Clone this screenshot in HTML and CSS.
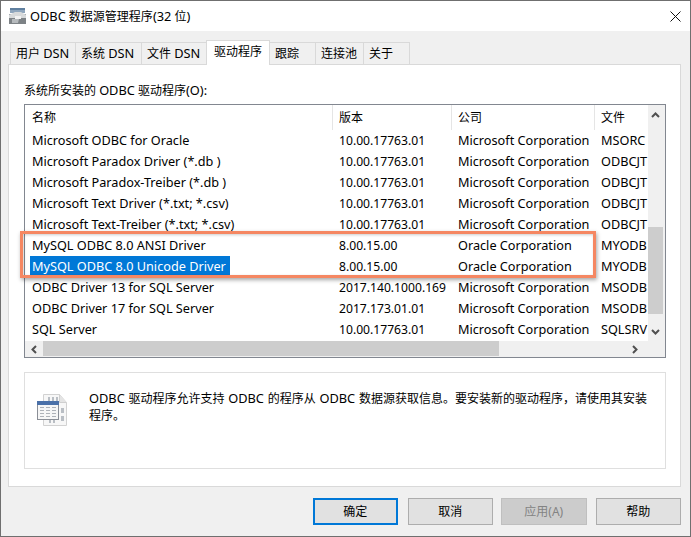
FILE: index.html
```html
<!DOCTYPE html>
<html lang="zh-CN">
<head>
<meta charset="utf-8">
<title>ODBC 数据源管理程序(32 位)</title>
<link rel="stylesheet" href="styles.css">
</head>
<body>
<div class="window">
  <header class="titlebar">
    <svg class="app-icon" width="18" height="18" viewBox="0 0 18 18">
      <rect x="1" y="1" width="15" height="5" fill="#8fa6bd"/>
      <rect x="1" y="1" width="15" height="2" fill="#5f7f9f"/>
      <path d="M0 7h17v10H0z" fill="#9a9fa3"/>
      <path d="M0 8l6-3h6l5 3v3H0z" fill="#d8dadb"/>
      <path d="M0 11h17v6H0z" fill="#7d8286"/>
      <path d="M3 12h7l-1 4H3z" fill="#b6babd"/>
      <rect x="6" y="9" width="6" height="3" fill="#f2f2f2"/>
    </svg>
    <span class="title"><span class="lat">ODBC</span> 数据源管理程序<span class="lat">(32</span> 位<span class="lat">)</span></span>
    <svg class="close" width="11" height="11" viewBox="0 0 11 11"><path d="M.5.5l10 10M10.500.5l-10 10" stroke="#111" fill="none"/></svg>
  </header>
  <main class="content">
    <nav class="tabs">
      <div class="tab">用户 <span class="lat">DSN</span></div>
      <div class="tab">系统 <span class="lat">DSN</span></div>
      <div class="tab">文件 <span class="lat">DSN</span></div>
      <div class="tab active">驱动程序</div>
      <div class="tab">跟踪</div>
      <div class="tab">连接池</div>
      <div class="tab">关于</div>
    </nav>
    <section class="panel">
      <div class="list-label">系统所安装的 <span class="lat">ODBC</span> 驱动程序<span class="lat">(O):</span></div>
      <div class="list">
        <div class="list-main">
          <div class="list-view">
            <div class="row head">
              <div class="cell">名称</div>
              <div class="cell">版本</div>
              <div class="cell">公司</div>
              <div class="cell">文件</div>
            </div>
            <div class="row"><div class="cell">Microsoft ODBC for Oracle</div><div class="cell ver">10.00.17763.01</div><div class="cell">Microsoft Corporation</div><div class="cell">MSORC</div></div>
            <div class="row"><div class="cell">Microsoft Paradox Driver (*.db )</div><div class="cell ver">10.00.17763.01</div><div class="cell">Microsoft Corporation</div><div class="cell">ODBCJT</div></div>
            <div class="row"><div class="cell">Microsoft Paradox-Treiber (*.db )</div><div class="cell ver">10.00.17763.01</div><div class="cell">Microsoft Corporation</div><div class="cell">ODBCJT</div></div>
            <div class="row"><div class="cell">Microsoft Text Driver (*.txt; *.csv)</div><div class="cell ver">10.00.17763.01</div><div class="cell">Microsoft Corporation</div><div class="cell">ODBCJT</div></div>
            <div class="row"><div class="cell">Microsoft Text-Treiber (*.txt; *.csv)</div><div class="cell ver">10.00.17763.01</div><div class="cell">Microsoft Corporation</div><div class="cell">ODBCJT</div></div>
            <div class="row"><div class="cell">MySQL ODBC 8.0 ANSI Driver</div><div class="cell ver">8.00.15.00</div><div class="cell">Oracle Corporation</div><div class="cell">MYODB</div></div>
            <div class="row"><div class="cell"><span class="selected">MySQL ODBC 8.0 Unicode Driver</span></div><div class="cell ver">8.00.15.00</div><div class="cell">Oracle Corporation</div><div class="cell">MYODB</div></div>
            <div class="row"><div class="cell">ODBC Driver 13 for SQL Server</div><div class="cell ver">2017.140.1000.169</div><div class="cell">Microsoft Corporation</div><div class="cell">MSODB</div></div>
            <div class="row"><div class="cell">ODBC Driver 17 for SQL Server</div><div class="cell ver">2017.173.01.01</div><div class="cell">Microsoft Corporation</div><div class="cell">MSODB</div></div>
            <div class="row"><div class="cell">SQL Server</div><div class="cell ver">10.00.17763.01</div><div class="cell">Microsoft Corporation</div><div class="cell">SQLSRV</div></div>
          </div>
          <div class="vscroll">
            <svg class="arrow" width="9" height="6" viewBox="0 0 9 6"><path d="M1 5l3.500-3.500L8 5" stroke="#505050" stroke-width="2" fill="none"/></svg>
            <div class="vthumb"></div>
            <svg class="arrow" width="9" height="6" viewBox="0 0 9 6"><path d="M1 1l3.500 3.500L8 1" stroke="#505050" stroke-width="2" fill="none"/></svg>
          </div>
        </div>
        <div class="hscroll">
          <svg class="arrow-h" width="6" height="9" viewBox="0 0 6 9"><path d="M5 1L1.500 4.500 5 8" stroke="#505050" stroke-width="2" fill="none"/></svg>
          <div class="hthumb"></div>
          <svg class="arrow-h" width="6" height="9" viewBox="0 0 6 9"><path d="M1 1l3.500 3.500L1 8" stroke="#505050" stroke-width="2" fill="none"/></svg>
        </div>
      </div>
      <div class="info">
        <svg class="info-icon" width="32" height="33" viewBox="0 0 32 33">
          <path d="M6.500.5h16l7 8v23h-23z" fill="#f7f7f7" stroke="#d2d2d2"/>
          <path d="M22.500.5v8h7" fill="#e4e4e4" stroke="#cfcfcf"/>
          <g fill="#b9bec4"><rect x="11" y="3" width="2" height="4"/><rect x="15" y="3" width="2" height="4"/><rect x="19" y="3" width="2" height="4"/><rect x="24" y="14" width="3" height="5"/><rect x="24" y="22" width="3" height="5"/><rect x="12" y="26" width="2" height="3"/><rect x="16" y="26" width="2" height="3"/></g>
          <rect x="0.500" y="7.500" width="21" height="18" fill="#f6f6f6" stroke="#8a8e96"/>
          <rect x="0" y="7" width="22" height="4" fill="#4a70a8"/>
          <g fill="#aeb2b8"><rect x="3" y="13" width="4" height="1"/><rect x="9" y="13" width="4" height="1"/><rect x="15" y="13" width="4" height="1"/><rect x="3" y="16" width="4" height="1"/><rect x="9" y="16" width="4" height="1"/><rect x="15" y="16" width="4" height="1"/><rect x="3" y="19" width="4" height="1"/><rect x="9" y="19" width="4" height="1"/><rect x="15" y="19" width="4" height="1"/><rect x="3" y="22" width="4" height="1"/><rect x="9" y="22" width="4" height="1"/><rect x="15" y="22" width="4" height="1"/></g>
        </svg>
        <p class="info-text"><span class="lat">ODBC</span> 驱动程序允许支持 <span class="lat">ODBC</span> 的程序从 <span class="lat">ODBC</span> 数据源获取信息。要安装新的驱动程序，请使用其安装<br>程序。</p>
      </div>
      <div class="highlight"></div>
    </section>
    <footer class="buttons">
      <div class="btn primary">确定</div>
      <div class="btn cancel">取消</div>
      <div class="btn disabled">应用(A)</div>
      <div class="btn">帮助</div>
    </footer>
  </main>
</div>
</body>
</html>
```
FILE: styles.css
```css
* { box-sizing: border-box; }
html, body { margin: 0; padding: 0; }
body {
  width: 691px;
  height: 537px;
  overflow: hidden;
  font-family: "Noto Sans", "Noto Sans CJK SC", sans-serif;
  font-size: 12px;
  color: #000;
}
.lat { font-size: 12.8px; }
.window {
  width: 691px;
  height: 537px;
  display: flex;
  flex-direction: column;
  border: 1px solid #6f6f6f;
  background: #f0f0f0;
}
.titlebar {
  height: 30px;
  flex: none;
  background: #fff;
  display: flex;
  align-items: center;
  padding: 0 9px 0 8px;
  gap: 3px;
}
.title { flex: 1; }
.content { flex: 1; display: flex; flex-direction: column; padding: 0 9px 0 7px; min-height: 0; }
.tabs {
  display: grid;
  grid-template-columns: 65px 66px 65px 63px 46px 48px 46px;
  align-items: end;
  height: 33px;
  padding-left: 2px;
  position: relative;
  z-index: 1;
}
.tab {
  height: 22px;
  line-height: 21px;
  padding-left: 5px;
  border: 1px solid #d9d9d9;
  border-bottom: 0;
  background: #f0f0f0;
  margin-right: -1px;
  white-space: nowrap;
}
.tab.active {
  height: 25px;
  line-height: 21px;
  background: #fff;
  margin-bottom: -1px;
  padding-left: 7px;
  position: relative;
  z-index: 1;
}
.panel {
  height: 423px;
  flex: none;
  background: #fff;
  border: 1px solid #d9d9d9;
  padding: 0 14px 0 15px;
  position: relative;
}
.list-label { height: 39px; padding-top: 15px; line-height: 20px; }
.list {
  height: 254px;
  border: 1px solid #828790;
  display: flex;
  flex-direction: column;
}
.list-main { flex: 1; display: flex; min-height: 0; }
.list-view { flex: 1; min-width: 0; overflow: hidden; }
.row {
  display: grid;
  grid-template-columns: 307px 119px 143px 54px;
  height: 21px;
  line-height: 21px;
  font-size: 12.7px;
  white-space: nowrap;
}
.row.head { height: 25px; line-height: 25px; font-size: 12px; }
.cell { padding-left: 7px; overflow: hidden; }
.ver { font-size: 12.15px; }
.row.head .cell + .cell { border-left: 1px solid #e5e5e5; padding-left: 6px; height: 25px; }
.selected { display: inline-block; background: #0078d7; color: #fff; margin-left: -2px; padding: 0 2px; width: 200px; }
.vscroll {
  width: 17px;
  flex: none;
  background: #f0f0f0;
  display: flex;
  flex-direction: column;
  align-items: flex-start;
}
.arrow { margin: 7px 0 0 3px; flex: none; }
.vthumb { width: 15px; height: 87px; margin-top: 109px; background: #cdcdcd; }
.vscroll .arrow:last-child { margin-top: 15px; }
.hscroll {
  height: 16px;
  flex: none;
  background: #f0f0f0;
  display: flex;
  align-items: center;
}
.arrow-h { margin-left: 6px; flex: none; }
.hthumb { width: 456px; height: 15px; margin: 0 0 1px 6px; background: #cdcdcd; }
.hscroll .arrow-h:last-child { margin-left: 133px; }
.info {
  height: 97px;
  margin-top: 14px;
  border: 1px solid #dfdfdf;
  display: flex;
  padding: 21px 10px 0 12px;
  gap: 20px;
}
.info-icon { flex: none; }
.info-text { margin: -4px 0 0; line-height: 17px; word-spacing: .6px; white-space: nowrap; }
.highlight {
  position: absolute;
  left: 11px;
  top: 166px;
  width: 576px;
  height: 47px;
  border: 3px solid #f58762;
  box-shadow: 1px 2px 4px rgba(0, 0, 0, .35), inset 1px 1px 3px rgba(0, 0, 0, .2);
  pointer-events: none;
}
.buttons { display: flex; margin-top: 11px; padding-left: 305px; }
.btn {
  width: 86px;
  height: 27px;
  line-height: 25px;
  text-align: center;
  background: #e1e1e1;
  border: 1px solid #adadad;
  margin-left: 9px;
}
.primary { width: 85px; margin-left: 0; border: 2px solid #0078d7; line-height: 23px; }
.cancel { margin-left: 10px; }
.disabled { margin-left: 8px; background: #cccccc; border-color: #bfbfbf; color: #838383; }
```
